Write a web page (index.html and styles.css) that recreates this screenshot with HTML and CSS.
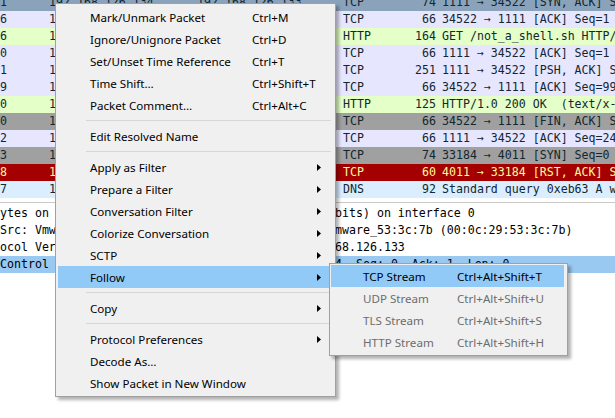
FILE: index.html
```html
<!DOCTYPE html>
<html>
<head>
<meta charset="utf-8">
<link rel="stylesheet" href="styles.css">
</head>
<body>
<div class="app">
  <div class="plist">
    <div class="row r-sel"><span>1</span><span>192.168.126.134</span><span>192.168.126.133</span><span>TCP</span><span class="len">74</span><span class="info">1111 → 34522 [SYN, ACK] Seq=0 Ack=1 Win=28960 Len=0</span></div>
    <div class="row r-tcp"><span>6</span><span>192.168.126.133</span><span>192.168.126.134</span><span>TCP</span><span class="len">66</span><span class="info">34522 → 1111 [ACK] Seq=1 Ack=1 Win=29312 Len=0</span></div>
    <div class="row r-http"><span>6</span><span>192.168.126.133</span><span>192.168.126.134</span><span>HTTP</span><span class="len">164</span><span class="info">GET /not_a_shell.sh HTTP/1.1</span></div>
    <div class="row r-tcp"><span>0</span><span>192.168.126.134</span><span>192.168.126.133</span><span>TCP</span><span class="len">66</span><span class="info">1111 → 34522 [ACK] Seq=1 Ack=99 Win=29056 Len=0</span></div>
    <div class="row r-tcp"><span>1</span><span>192.168.126.134</span><span>192.168.126.133</span><span>TCP</span><span class="len">251</span><span class="info">1111 → 34522 [PSH, ACK] Seq=1 Ack=99 Win=29056 Len=185</span></div>
    <div class="row r-tcp"><span>9</span><span>192.168.126.133</span><span>192.168.126.134</span><span>TCP</span><span class="len">66</span><span class="info">34522 → 1111 [ACK] Seq=99 Ack=186 Win=30336 Len=0</span></div>
    <div class="row r-http"><span>0</span><span>192.168.126.134</span><span>192.168.126.133</span><span>HTTP</span><span class="len">125</span><span class="info">HTTP/1.0 200 OK  (text/x-sh)</span></div>
    <div class="row r-syn"><span>0</span><span>192.168.126.133</span><span>192.168.126.134</span><span>TCP</span><span class="len">66</span><span class="info">34522 → 1111 [FIN, ACK] Seq=99 Ack=245 Win=30336 Len=0</span></div>
    <div class="row r-tcp"><span>2</span><span>192.168.126.134</span><span>192.168.126.133</span><span>TCP</span><span class="len">66</span><span class="info">1111 → 34522 [ACK] Seq=245 Ack=100 Win=29056 Len=0</span></div>
    <div class="row r-syn"><span>3</span><span>192.168.126.133</span><span>192.168.126.134</span><span>TCP</span><span class="len">74</span><span class="info">33184 → 4011 [SYN] Seq=0 Win=29200 Len=0 MSS=1460</span></div>
    <div class="row r-rst"><span>8</span><span>192.168.126.134</span><span>192.168.126.133</span><span>TCP</span><span class="len">60</span><span class="info">4011 → 33184 [RST, ACK] Seq=1 Ack=1 Win=0 Len=0</span></div>
    <div class="row r-udp"><span>7</span><span>192.168.126.133</span><span>192.168.126.2</span><span>DNS</span><span class="len">92</span><span class="info">Standard query 0xeb63 A www.example.com</span></div>
  </div>
  <div class="details">
    <div class="dline">ytes on wire (592 bits), 74 bytes captured (592 bits) on interface 0</div>
    <div class="dline">Src: Vmware_e9:6a:2e (00:0c:29:e9:6a:2e), Dst: Vmware_53:3c:7b (00:0c:29:53:3c:7b)</div>
    <div class="dline">ocol Version 4, Src: 192.168.126.134, Dst: 192.168.126.133</div>
    <div class="dline dsel">Control Protocol, Src Port: 4011, Dst Port: 33184, Seq: 0, Ack: 1, Len: 0</div>
  </div>
</div>

<div class="menu main-menu">
  <div class="item"><span>Mark/Unmark Packet</span><span>Ctrl+M</span></div>
  <div class="item"><span>Ignore/Unignore Packet</span><span>Ctrl+D</span></div>
  <div class="item"><span>Set/Unset Time Reference</span><span>Ctrl+T</span></div>
  <div class="item"><span>Time Shift…</span><span>Ctrl+Shift+T</span></div>
  <div class="item"><span>Packet Comment…</span><span>Ctrl+Alt+C</span></div>
  <div class="sep"></div>
  <div class="item"><span>Edit Resolved Name</span><span></span></div>
  <div class="sep"></div>
  <div class="item"><span>Apply as Filter</span><span></span><svg class="arrow" width="4" height="7" viewBox="0 0 4 7"><polygon points="0,0 4,3.5 0,7" fill="#000"/></svg></div>
  <div class="item"><span>Prepare a Filter</span><span></span><svg class="arrow" width="4" height="7" viewBox="0 0 4 7"><polygon points="0,0 4,3.5 0,7" fill="#000"/></svg></div>
  <div class="item"><span>Conversation Filter</span><span></span><svg class="arrow" width="4" height="7" viewBox="0 0 4 7"><polygon points="0,0 4,3.5 0,7" fill="#000"/></svg></div>
  <div class="item"><span>Colorize Conversation</span><span></span><svg class="arrow" width="4" height="7" viewBox="0 0 4 7"><polygon points="0,0 4,3.5 0,7" fill="#000"/></svg></div>
  <div class="item"><span>SCTP</span><span></span><svg class="arrow" width="4" height="7" viewBox="0 0 4 7"><polygon points="0,0 4,3.5 0,7" fill="#000"/></svg></div>
  <div class="item active"><span>Follow</span><span></span><svg class="arrow" width="4" height="7" viewBox="0 0 4 7"><polygon points="0,0 4,3.5 0,7" fill="#000"/></svg></div>
  <div class="sep"></div>
  <div class="item"><span>Copy</span><span></span><svg class="arrow" width="4" height="7" viewBox="0 0 4 7"><polygon points="0,0 4,3.5 0,7" fill="#000"/></svg></div>
  <div class="sep"></div>
  <div class="item"><span>Protocol Preferences</span><span></span><svg class="arrow" width="4" height="7" viewBox="0 0 4 7"><polygon points="0,0 4,3.5 0,7" fill="#000"/></svg></div>
  <div class="item"><span>Decode As…</span><span></span></div>
  <div class="item"><span>Show Packet in New Window</span><span></span></div>
</div>

<div class="menu sub-menu">
  <div class="item active"><span>TCP Stream</span><span>Ctrl+Alt+Shift+T</span></div>
  <div class="item disabled"><span>UDP Stream</span><span>Ctrl+Alt+Shift+U</span></div>
  <div class="item disabled"><span>TLS Stream</span><span>Ctrl+Alt+Shift+S</span></div>
  <div class="item disabled"><span>HTTP Stream</span><span>Ctrl+Alt+Shift+H</span></div>
</div>
</body>
</html>
```

FILE: styles.css
```css
html, body {
  margin: 0;
  padding: 0;
  background: #ffffff;
}
body {
  width: 615px;
  height: 418px;
  overflow: hidden;
  position: relative;
}
.app {
  font-family: "DejaVu Sans Mono", "Liberation Mono", monospace;
  font-size: 11.6px;
  color: #12272e;
  white-space: nowrap;
}
.plist {
  margin-top: -6px;
}
.row {
  display: grid;
  grid-template-columns: 49px 148px 146px 60px 33px 1fr;
  height: 17px;
  line-height: 17px;
  overflow: hidden;
}
.row span {
  overflow: hidden;
}
.row .len {
  text-align: right;
}
.row .info {
  padding-left: 6px;
  white-space: pre;
}
.r-sel { background: #8aa3ba; }
.r-tcp { background: #e7e6ff; }
.r-http { background: #e4ffc7; }
.r-syn { background: #a0a0a0; }
.r-rst { background: #a40000; color: #fffc9c; }
.r-udp { background: #daeeff; }

.details {
  margin-top: 4px;
  border-top: 1px solid #c8c8c8;
  padding-top: 2px;
  color: #000;
}
.dline {
  height: 17px;
  line-height: 17px;
  overflow: hidden;
}
.dsel {
  background: #99c9f0;
}

.menu {
  position: absolute;
  background: #f0f0f0;
  border: 1px solid #a0a0a0;
  box-shadow: 3px 3px 3px rgba(0, 0, 0, 0.3);
  font-family: "Noto Sans", "Open Sans", sans-serif;
  font-size: 11.6px;
  color: #000;
  white-space: nowrap;
}
.main-menu {
  left: 55px;
  top: 3px;
  width: 275px;
  padding: 2px 2px;
}
.sub-menu {
  left: 329px;
  top: 263px;
  width: 233px;
  padding: 1px 3px 2px 1px;
}
.item {
  display: grid;
  align-items: center;
  height: 22px;
  padding-left: 32px;
  padding-right: 12px;
}
.main-menu .item {
  grid-template-columns: 162px 1fr 4px;
}
.sub-menu .item {
  grid-template-columns: 94px 1fr;
}
.item.active {
  background: #91c9f7;
}
.item.disabled {
  color: #6d6d6d;
}
.arrow {
  display: block;
}
.sep {
  height: 1px;
  background: #d7d7d7;
  margin: 4px 2px 4px 28px;
}
```
